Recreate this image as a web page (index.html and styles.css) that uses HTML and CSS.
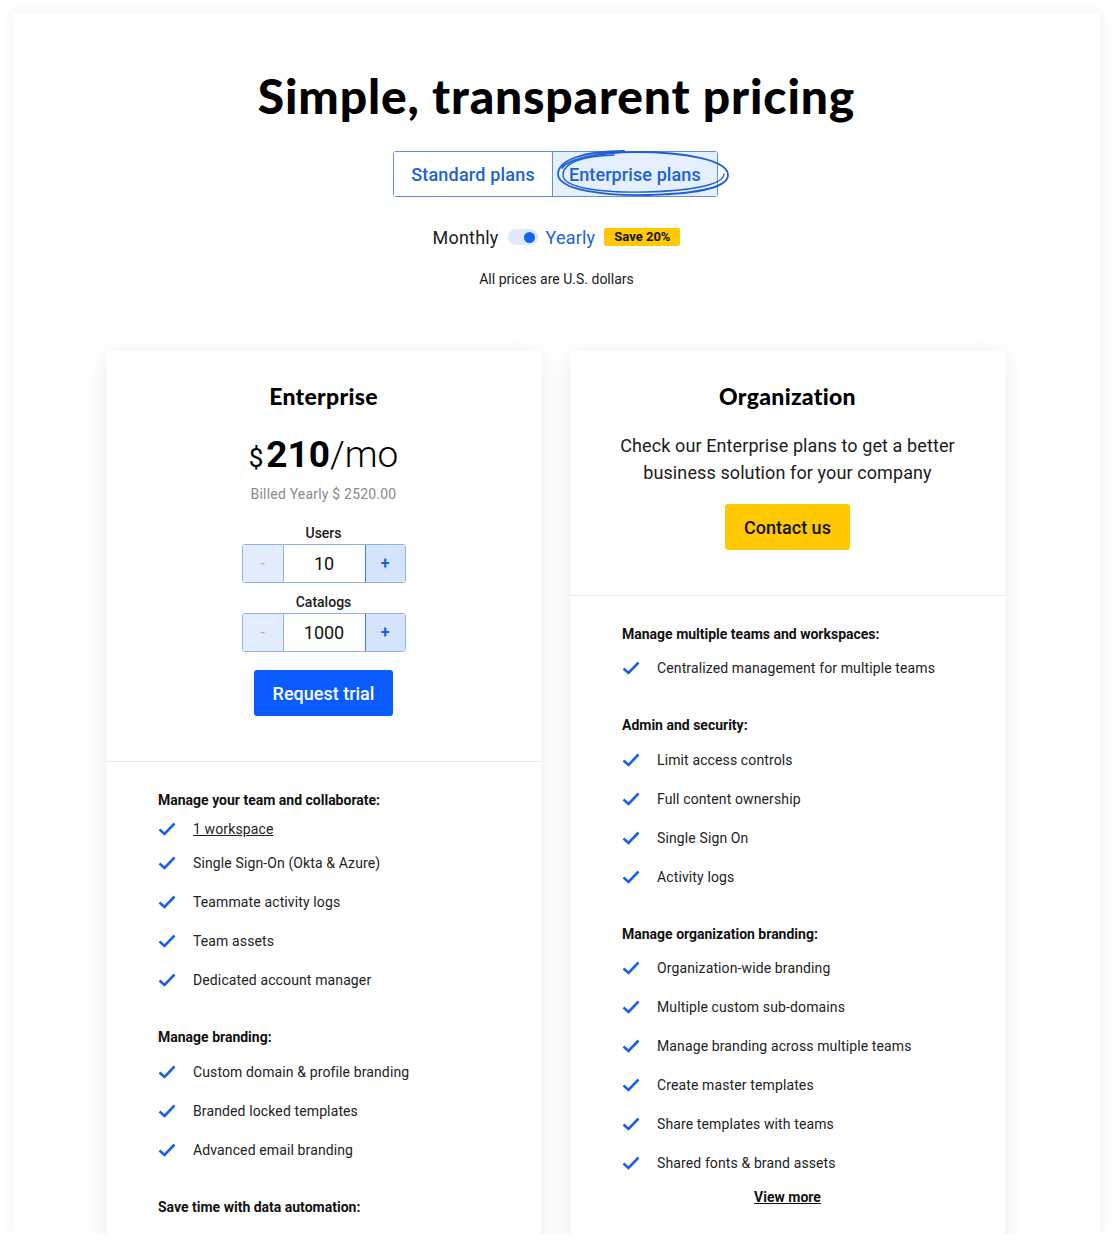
FILE: index.html
```html
<!DOCTYPE html>
<html>
<head>
    <title>Pricing</title>
    <link rel="stylesheet" href="styles.css">
</head>
<body>
    <div class="page">
        <h1 class="title">Simple, transparent pricing</h1>

        <div class="tabs">
            <button class="tab">Standard plans</button>
            <button class="tab tab-active">Enterprise plans
                <svg class="scribble" width="178" height="52" viewBox="0 0 178 52">
                    <path d="M70 3 C 30 3, 4 12, 4 26 C 4 42, 50 48, 95 47 C 140 46, 174 40, 174 27 C 174 12, 130 4, 82 4 C 45 4, 14 11, 8 20" fill="none" stroke="#1f5fd4" stroke-width="1.8" stroke-linecap="round"/>
                    <path d="M60 7 C 28 8, 9 15, 9 27 C 9 40, 48 45, 92 44 C 135 43, 170 37, 170 26" fill="none" stroke="#1f5fd4" stroke-width="1.4" stroke-linecap="round"/>
                </svg>
            </button>
        </div>

        <div class="billing">
            <span class="billing-label">Monthly</span>
            <span class="switch"><span class="switch-dot"></span></span>
            <span class="billing-label billing-on">Yearly</span>
            <span class="badge">Save 20%</span>
        </div>

        <p class="currency">All prices are U.S. dollars</p>

        <div class="cards">
            <div class="card">
                <div class="card-top">
                    <h2 class="card-title">Enterprise</h2>
                    <div class="price"><span class="price-cur">$</span><span class="price-num">210</span><span class="price-per">/mo</span></div>
                    <p class="billed">Billed Yearly $ 2520.00</p>

                    <div class="stepper-label">Users</div>
                    <div class="stepper">
                        <button class="step step-minus">-</button>
                        <div class="step-value">10</div>
                        <button class="step step-plus">+</button>
                    </div>

                    <div class="stepper-label stepper-label-2">Catalogs</div>
                    <div class="stepper">
                        <button class="step step-minus">-</button>
                        <div class="step-value">1000</div>
                        <button class="step step-plus">+</button>
                    </div>

                    <button class="btn btn-blue">Request trial</button>
                </div>

                <div class="card-features">
                    <h3 class="group-title">Manage your team and collaborate:</h3>
                    <ul class="group">
                        <li class="feature feature-short"><span class="check"></span><a href="#" class="feature-link">1 workspace</a></li>
                        <li class="feature"><span class="check"></span>Single Sign-On (Okta &amp; Azure)</li>
                        <li class="feature"><span class="check"></span>Teammate activity logs</li>
                        <li class="feature"><span class="check"></span>Team assets</li>
                        <li class="feature"><span class="check"></span>Dedicated account manager</li>
                    </ul>

                    <h3 class="group-title">Manage branding:</h3>
                    <ul class="group">
                        <li class="feature"><span class="check"></span>Custom domain &amp; profile branding</li>
                        <li class="feature"><span class="check"></span>Branded locked templates</li>
                        <li class="feature"><span class="check"></span>Advanced email branding</li>
                    </ul>

                    <h3 class="group-title">Save time with data automation:</h3>
                </div>
            </div>

            <div class="card">
                <div class="card-top">
                    <h2 class="card-title">Organization</h2>
                    <p class="card-text">Check our Enterprise plans to get a better business solution for your company</p>
                    <button class="btn btn-yellow">Contact us</button>
                </div>

                <div class="card-features">
                    <h3 class="group-title">Manage multiple teams and workspaces:</h3>
                    <ul class="group">
                        <li class="feature"><span class="check"></span>Centralized management for multiple teams</li>
                    </ul>

                    <h3 class="group-title">Admin and security:</h3>
                    <ul class="group">
                        <li class="feature"><span class="check"></span>Limit access controls</li>
                        <li class="feature"><span class="check"></span>Full content ownership</li>
                        <li class="feature"><span class="check"></span>Single Sign On</li>
                        <li class="feature"><span class="check"></span>Activity logs</li>
                    </ul>

                    <h3 class="group-title">Manage organization branding:</h3>
                    <ul class="group">
                        <li class="feature"><span class="check"></span>Organization-wide branding</li>
                        <li class="feature"><span class="check"></span>Multiple custom sub-domains</li>
                        <li class="feature"><span class="check"></span>Manage branding across multiple teams</li>
                        <li class="feature"><span class="check"></span>Create master templates</li>
                        <li class="feature"><span class="check"></span>Share templates with teams</li>
                        <li class="feature"><span class="check"></span>Shared fonts &amp; brand assets</li>
                    </ul>

                    <a href="#" class="view-more">View more</a>
                </div>
            </div>
        </div>
    </div>
</body>
</html>
```

FILE: styles.css
```css
body {
    background-color: #ffffff;
    font-family: Roboto, "Liberation Sans", Arial, sans-serif;
    color: #1b1b1b;
    margin: 0;
    padding: 13px 12px 0 13px;
}

.page {
    background-color: #ffffff;
    height: 1221px;
    overflow: hidden;
    padding-top: 55px;
    box-sizing: border-box;
    box-shadow: 0 0 14px rgba(0, 0, 0, 0.07);
    text-align: center;
}

.title {
    font-family: Lato, "Liberation Sans", sans-serif;
    font-weight: 900;
    font-size: 48px;
    line-height: 56px;
    letter-spacing: 0.85px;
    color: #000000;
    margin: 0;
}

/* plan tabs */
.tabs {
    display: inline-flex;
    margin-top: 27px;
    margin-right: 2px;
    border: 1px solid #5b8fe6;
    border-radius: 3px;
    height: 46px;
    box-sizing: border-box;
}

.tab {
    position: relative;
    font-family: Roboto, sans-serif;
    font-size: 18px;
    font-weight: 500;
    color: #1c62d8;
    background: #ffffff;
    border: none;
    padding: 0 17px;
    cursor: pointer;
    letter-spacing: 0.2px;
}

.tab-active {
    background-color: #e6effd;
    border-left: 1px solid #5b8fe6;
    padding: 0 16px;
    letter-spacing: 0.1px;
}

.scribble {
    position: absolute;
    left: 1px;
    top: -4px;
}

/* billing switch */
.billing {
    display: flex;
    justify-content: center;
    align-items: center;
    margin-top: 28px;
    height: 24px;
}

.billing-label {
    font-size: 18px;
    color: #1b1b1b;
    letter-spacing: 0.2px;
}

.billing-on {
    color: #1c62d8;
}

.switch {
    display: inline-flex;
    align-items: center;
    justify-content: flex-end;
    width: 30px;
    height: 16px;
    background-color: #dfe9fb;
    border-radius: 8px;
    margin: 0 8px 0 9px;
    padding-right: 3px;
    box-sizing: border-box;
}

.switch-dot {
    width: 11px;
    height: 11px;
    border-radius: 50%;
    background-color: #1166ee;
}

.badge {
    background-color: #ffc800;
    font-size: 13px;
    font-weight: 700;
    color: #111111;
    padding: 2px 10px;
    border-radius: 2px;
    margin-left: 9px;
    line-height: 14px;
}

.currency {
    font-size: 14px;
    line-height: 20px;
    margin: 20px 0 0;
    color: #1b1b1b;
}

/* cards */
.cards {
    display: flex;
    justify-content: center;
    gap: 29px;
    margin-top: 62px;
    padding-right: 2px;
}

.card {
    width: 435px;
    height: 900px;
    background-color: #ffffff;
    box-shadow: 0 4px 22px rgba(20, 30, 60, 0.09);
    text-align: center;
}

.card-top {
    display: flex;
    flex-direction: column;
    align-items: center;
    padding: 31px 0 45px;
    border-bottom: 1px solid #e9e9ec;
}

.card-title {
    font-family: Lato, "Liberation Sans", sans-serif;
    font-weight: 900;
    font-size: 23px;
    line-height: 28px;
    letter-spacing: 0.3px;
    margin: 0;
    color: #000000;
}

.price {
    margin-top: 23px;
    line-height: 44px;
    height: 44px;
    color: #000000;
}

.price-cur {
    font-size: 26px;
    margin-right: 3px;
}

.price-num {
    font-size: 37px;
    font-weight: 700;
}

.price-per {
    font-size: 37px;
    font-weight: 300;
}

.billed {
    margin: 7px 0 0;
    font-size: 14px;
    line-height: 20px;
    color: #8a8a8a;
    letter-spacing: 0.2px;
}

.stepper-label {
    margin-top: 20px;
    font-size: 14px;
    font-weight: 500;
    line-height: 18px;
}

.stepper-label-2 {
    margin-top: 10px;
}

.stepper {
    display: flex;
    margin-top: 2px;
    height: 39px;
    width: 164px;
    border: 1px solid #8fb2ee;
    border-radius: 3px;
    box-sizing: border-box;
    overflow: hidden;
}

.step {
    width: 40px;
    border: none;
    font-family: Roboto, sans-serif;
    font-size: 16px;
    cursor: pointer;
}

.step-minus {
    background-color: #e3ecfb;
    color: #9ab7ea;
}

.step-plus {
    background-color: #d6e4fb;
    color: #1c62d8;
    font-weight: 700;
    border-left: 1px solid #3e7be0;
}

.step-value {
    flex: 1;
    display: flex;
    align-items: center;
    justify-content: center;
    font-size: 18px;
    background-color: #ffffff;
    border-left: 1px solid #8fb2ee;
    color: #111111;
}

.btn {
    font-family: Roboto, sans-serif;
    font-size: 18px;
    font-weight: 500;
    height: 46px;
    border: none;
    border-radius: 3px;
    cursor: pointer;
}

.btn-blue {
    margin-top: 18px;
    width: 139px;
    background-color: #0a5cff;
    color: #ffffff;
}

.btn-yellow {
    margin-top: 18px;
    width: 125px;
    background-color: #ffc800;
    color: #111111;
}

.card-text {
    margin: 22px 0 0;
    font-size: 18px;
    line-height: 27px;
    width: 340px;
    letter-spacing: 0.1px;
}

/* feature lists */
.card-features {
    padding: 27.5px 52px 0;
    text-align: left;
}

.group-title {
    font-size: 14px;
    font-weight: 700;
    line-height: 20px;
    margin: 0;
    color: #111111;
}

.group {
    list-style: none;
    margin: 5px 0 27.5px;
    padding: 0;
}

.feature {
    display: flex;
    align-items: center;
    height: 39px;
    font-size: 14px;
    letter-spacing: 0.12px;
    color: #222222;
}

.feature-short {
    height: 29px;
}

.feature-link {
    color: #222222;
    text-decoration: underline;
}

.check {
    width: 18px;
    height: 14px;
    margin-right: 17px;
    flex-shrink: 0;
    background: no-repeat center / 18px 14px url("data:image/svg+xml,%3Csvg xmlns='http://www.w3.org/2000/svg' viewBox='0 0 18 14'%3E%3Cpath d='M1.5 7.5 L6.5 12 L16.5 1.5' fill='none' stroke='%231a62e8' stroke-width='2.6'/%3E%3C/svg%3E");
}

.view-more {
    display: block;
    text-align: center;
    font-size: 14px;
    font-weight: 700;
    color: #111111;
    text-decoration: underline;
    margin-top: -21px;
}
```
